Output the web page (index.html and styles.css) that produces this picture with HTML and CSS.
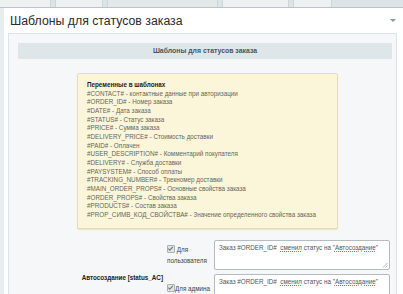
FILE: index.html
```html
<!DOCTYPE html>
<html>

<head>
    <title>Шаблоны для статусов заказа</title>
    <link rel="stylesheet" href="styles.css">
</head>

<body>
    <div class="tabs">
        <div class="tab" style="width: 50px"></div>
        <div class="tab" style="width: 46px"></div>
        <div class="tab tab-active" style="width: 109px"></div>
        <div class="tab" style="width: 65px"></div>
        <div class="tab" style="width: 37px"></div>
    </div>

    <div class="panel">
        <div class="panel-head">
            <h2>Шаблоны для статусов заказа</h2>
            <span class="arrow"></span>
        </div>

        <div class="cont">
            <div class="bar">Шаблоны для статусов заказа</div>

            <div class="note">
                <b>Переменные в шаблонах</b><br>
                #CONTACT# - контактные данные при авторизации<br>
                #ORDER_ID# - Номер заказа<br>
                #DATE# - Дата заказа<br>
                #STATUS# - Статус заказа<br>
                #PRICE# - Сумма заказа<br>
                #DELIVERY_PRICE# - Стоимость доставки<br>
                #PAID# - Оплачен<br>
                #USER_DESCRIPTION# - Комментарий покупателя<br>
                #DELIVERY# - Служба доставки<br>
                #PAYSYSTEM# - Способ оплаты<br>
                #TRACKING_NUMBER# - Трекномер доставки<br>
                #MAIN_ORDER_PROPS# - Основные свойства заказа<br>
                #ORDER_PROPS# - Свойства заказа<br>
                #PRODUCTS# - Состав заказа<br>
                #PROP_СИМВ_КОД_СВОЙСТВА# - Значение определенного свойства заказа
            </div>

            <div class="rows">
                <div class="label"></div>
                <div class="check">
                    <span class="box"><svg width="7" height="7" viewBox="0 0 7 7"><path d="M1.3 3.6 L2.8 5.1 L5.8 1.8" fill="none" stroke="#6f787c" stroke-width="1.1"/></svg></span> Для пользователя
                </div>
                <div class="area">
                    Заказ #ORDER_ID#&nbsp; <span class="typo">сменил</span> статус на "<span class="typo">Автосоздание</span>"
                    <svg class="grip" width="6" height="6" viewBox="0 0 6 6"><path d="M5.5 1 L1 5.5 M5.5 3.5 L3.5 5.5" stroke="#9aa0a3" stroke-width="0.8"/></svg>
                </div>

                <div class="label label-status">Автосоздание [status_AC]</div>
                <div class="check">
                    <span class="box"><svg width="7" height="7" viewBox="0 0 7 7"><path d="M1.3 3.6 L2.8 5.1 L5.8 1.8" fill="none" stroke="#6f787c" stroke-width="1.1"/></svg></span>Для админа
                </div>
                <div class="area">
                    Заказ #ORDER_ID#&nbsp; <span class="typo">сменил</span> статус на "<span class="typo">Автосоздание</span>"
                </div>
            </div>
        </div>
    </div>
</body>

</html>
```

FILE: styles.css
```css
html {
    height: 294px;
    overflow: hidden;
}

body {
    margin: 0;
    background-color: #e7ecee;
    font-family: "Liberation Sans", Arial, sans-serif;
    color: #333;
}

.tabs {
    display: flex;
    gap: 4px;
    height: 7px;
    background-color: #dde4e7;
    border-bottom: 1px solid #b9c3c8;
}

.tab {
    background-color: #eef1f2;
    border-left: 1px solid #cfd6d9;
    border-right: 1px solid #cfd6d9;
}

.tab:first-child {
    border-left: none;
}

.tab-active {
    background-color: #e3e8ea;
}

.panel {
    margin-left: 4px;
    background-color: #fff;
    height: 286px;
    overflow: hidden;
}

.panel-head {
    display: flex;
    align-items: center;
    justify-content: space-between;
    height: 25px;
    padding: 0 7px 0 6px;
}

h2 {
    margin: 0;
    font-size: 12.3px;
    font-weight: normal;
    color: #2b2b2b;
}

.arrow {
    width: 0;
    height: 0;
    border-left: 3px solid transparent;
    border-right: 3px solid transparent;
    border-top: 3px solid #8e9699;
}

.cont {
    margin: 0 6px 0 4px;
    border: 1px solid #dce3e6;
    background-color: #f5f7f8;
    padding: 9px 4px 0 9px;
    height: 300px;
}

.bar {
    height: 16px;
    line-height: 16px;
    background-color: #dfe6e9;
    text-align: center;
    font-size: 6.9px;
    font-weight: bold;
    color: #4a5559;
}

.note {
    margin: 14px 0 0 59px;
    width: 250px;
    padding: 7px 0 8px 9px;
    background-color: #fbf6d9;
    border: 1px solid #e6deb3;
    border-radius: 2px;
    box-shadow: 0 1px 1px #e9e3c5;
    font-size: 6.3px;
    line-height: 8.65px;
    color: #66665c;
}

.note b {
    color: #222;
}

.rows {
    display: grid;
    grid-template-columns: 146px 46px 176px;
    column-gap: 2px;
    row-gap: 4px;
    margin-top: 11px;
    font-size: 6.3px;
    color: #444;
}

.label {
    text-align: right;
    padding-right: 1px;
}

.label-status {
    font-weight: bold;
    color: #222;
    align-self: start;
}

.check {
    align-self: center;
    line-height: 11px;
    padding-left: 1px;
}

.box {
    display: inline-block;
    width: 6px;
    height: 6px;
    border: 1px solid #a9b0b3;
    border-radius: 1px;
    background-color: #e1e5e7;
    vertical-align: -1px;
    position: relative;
}

.box svg {
    position: absolute;
    left: -1px;
    top: -1px;
}

.area {
    position: relative;
    height: 22px;
    padding: 3px 4px;
    background-color: #fff;
    border: 1px solid #b3bcc0;
    border-radius: 2px;
    font-size: 6.3px;
    line-height: 8px;
    color: #555;
}

.typo {
    text-decoration: underline dotted #e06a6a;
    text-decoration-thickness: 1px;
    text-underline-offset: 1px;
}

.grip {
    position: absolute;
    right: 1px;
    bottom: 1px;
}
```
